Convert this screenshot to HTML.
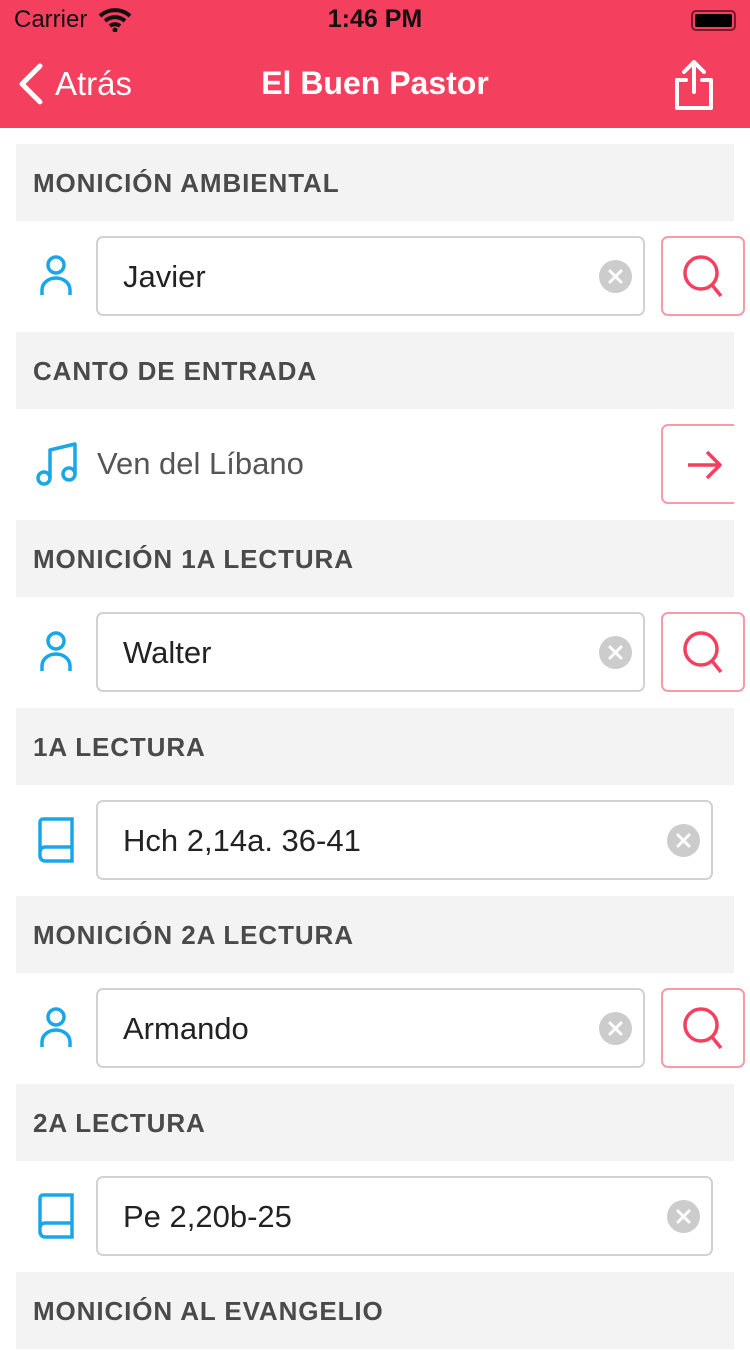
<!DOCTYPE html>
<html><head><meta charset="utf-8"><style>
*{margin:0;padding:0;box-sizing:border-box}
body{width:750px;height:1334px;overflow:hidden;background:#fff;font-family:"Liberation Sans",sans-serif;position:relative}
.a{position:absolute}
.nav{left:0;top:0;width:750px;height:128px;background:#f43f5e}
.sh{left:16px;width:718px;height:77px;background:#f3f3f3;color:#4a4a4a;font-weight:bold;font-size:26px;line-height:78px;padding-left:17px;letter-spacing:0.9px}
.in{left:96px;height:80px;border:2px solid #d2d2d2;border-radius:7px;font-size:31px;color:#222;line-height:78px;padding-left:25px}
.clr{width:33px;height:33px;border-radius:50%;background:#ccc}
.btn{left:661px;width:84px;height:80px;border:2px solid #f89aa8;border-radius:7px}
</style></head><body>
<div class="a nav"></div>
<div class="a" style="left:14px;top:6px;font-size:24px;color:#111">Carrier</div>
<svg class="a" style="left:98px;top:8px" width="34" height="24" viewBox="0 0 34 24"><path d="M2 8a22 22 0 0 1 30 0M7 13a15 15 0 0 1 20 0M12 18a8 8 0 0 1 10 0" stroke="#111" stroke-width="4" fill="none"/><circle cx="17" cy="22" r="2.5" fill="#111"/></svg>
<div class="a" style="left:0;width:750px;top:5px;text-align:center;font-size:25px;color:#111;font-weight:bold">1:46 PM</div>
<div class="a" style="left:691px;top:10px;width:45px;height:21px;border:2px solid #7a1a2a;border-radius:5px;padding:2px"><div style="width:100%;height:100%;background:#000;border-radius:2px"></div></div>
<svg class="a" style="left:14px;top:62px" width="30" height="44"><path d="M26 4L8 22l18 18" stroke="#fff" stroke-width="5" fill="none" stroke-linecap="round" stroke-linejoin="round"/></svg>
<div class="a" style="left:55px;top:65px;font-size:33px;color:#fff">Atrás</div>
<div class="a" style="left:0;width:750px;top:65px;text-align:center;font-size:32px;color:#fff;font-weight:bold">El Buen Pastor</div>
<svg class="a" style="left:670px;top:58px" width="50" height="52"><path d="M24 4v30M14 14l10-10 10 10M16 22H7v28h34V22h-9" stroke="#fff" stroke-width="4" fill="none" stroke-linecap="round" stroke-linejoin="round"/></svg>

<div class="a sh" style="top:144px">MONICIÓN AMBIENTAL</div>
<div class="a sh" style="top:332px">CANTO DE ENTRADA</div>
<div class="a sh" style="top:520px">MONICIÓN 1A LECTURA</div>
<div class="a sh" style="top:708px">1A LECTURA</div>
<div class="a sh" style="top:896px">MONICIÓN 2A LECTURA</div>
<div class="a sh" style="top:1084px">2A LECTURA</div>
<div class="a sh" style="top:1272px">MONICIÓN AL EVANGELIO</div>

<svg width="0" height="0" style="position:absolute"><defs><g id="x"><circle cx="16.5" cy="16.5" r="16.5" fill="#ccc"/><path d="M11 11l11 11M22 11L11 22" stroke="#fff" stroke-width="3" stroke-linecap="round"/></g></defs></svg>

<!-- row1 -->
<svg class="a" style="left:36px;top:254px" width="40" height="44"><circle cx="20" cy="11" r="8" stroke="#1aa7e8" stroke-width="3.5" fill="none"/><path d="M6 41v-5a14 12 0 0 1 28 0v5" stroke="#1aa7e8" stroke-width="3.5" fill="none"/></svg>
<div class="a in" style="top:236px;width:549px">Javier</div>
<svg class="a" style="left:599px;top:260px" width="33" height="33"><use href="#x"/></svg>
<div class="a btn" style="top:236px"></div>
<svg class="a" style="left:680px;top:254px" width="48" height="46"><circle cx="21" cy="19" r="16" stroke="#f43f5e" stroke-width="3.5" fill="none"/><path d="M32 31l9 11" stroke="#f43f5e" stroke-width="3.5"/></svg>

<!-- row2 -->
<svg class="a" style="left:34px;top:440px" width="46" height="48"><path d="M16 38V10l25-6v30" stroke="#1aa7e8" stroke-width="3.5" fill="none" stroke-linejoin="round"/><circle cx="10" cy="38" r="6" stroke="#1aa7e8" stroke-width="3.5" fill="none"/><circle cx="35" cy="34" r="6" stroke="#1aa7e8" stroke-width="3.5" fill="none"/></svg>
<div class="a" style="left:97px;top:446px;font-size:31px;color:#555">Ven del Líbano</div>
<div class="a btn" style="top:424px;width:73px;border-right:none;border-radius:7px 0 0 7px"></div>
<svg class="a" style="left:684px;top:446px" width="40" height="40"><path d="M4 19h32M23 6l13 13-13 13" stroke="#f43f5e" stroke-width="3.5" fill="none" stroke-linejoin="round"/></svg>

<!-- row3 -->
<svg class="a" style="left:36px;top:630px" width="40" height="44"><circle cx="20" cy="11" r="8" stroke="#1aa7e8" stroke-width="3.5" fill="none"/><path d="M6 41v-5a14 12 0 0 1 28 0v5" stroke="#1aa7e8" stroke-width="3.5" fill="none"/></svg>
<div class="a in" style="top:612px;width:549px">Walter</div>
<svg class="a" style="left:599px;top:636px" width="33" height="33"><use href="#x"/></svg>
<div class="a btn" style="top:612px"></div>
<svg class="a" style="left:680px;top:630px" width="48" height="46"><circle cx="21" cy="19" r="16" stroke="#f43f5e" stroke-width="3.5" fill="none"/><path d="M32 31l9 11" stroke="#f43f5e" stroke-width="3.5"/></svg>

<!-- row4 -->
<svg class="a" style="left:36px;top:816px" width="42" height="48"><path d="M4 36V6a3 3 0 0 1 3-3h29v42H9a5 5 0 0 1-5-5v-4a5 5 0 0 1 5-5h27" stroke="#1aa7e8" stroke-width="3.5" fill="none"/></svg>
<div class="a in" style="top:800px;width:617px">Hch 2,14a. 36-41</div>
<svg class="a" style="left:667px;top:824px" width="33" height="33"><use href="#x"/></svg>

<!-- row5 -->
<svg class="a" style="left:36px;top:1006px" width="40" height="44"><circle cx="20" cy="11" r="8" stroke="#1aa7e8" stroke-width="3.5" fill="none"/><path d="M6 41v-5a14 12 0 0 1 28 0v5" stroke="#1aa7e8" stroke-width="3.5" fill="none"/></svg>
<div class="a in" style="top:988px;width:549px">Armando</div>
<svg class="a" style="left:599px;top:1012px" width="33" height="33"><use href="#x"/></svg>
<div class="a btn" style="top:988px"></div>
<svg class="a" style="left:680px;top:1006px" width="48" height="46"><circle cx="21" cy="19" r="16" stroke="#f43f5e" stroke-width="3.5" fill="none"/><path d="M32 31l9 11" stroke="#f43f5e" stroke-width="3.5"/></svg>

<!-- row6 -->
<svg class="a" style="left:36px;top:1192px" width="42" height="48"><path d="M4 36V6a3 3 0 0 1 3-3h29v42H9a5 5 0 0 1-5-5v-4a5 5 0 0 1 5-5h27" stroke="#1aa7e8" stroke-width="3.5" fill="none"/></svg>
<div class="a in" style="top:1176px;width:617px">Pe 2,20b-25</div>
<svg class="a" style="left:667px;top:1200px" width="33" height="33"><use href="#x"/></svg>
</body></html>
